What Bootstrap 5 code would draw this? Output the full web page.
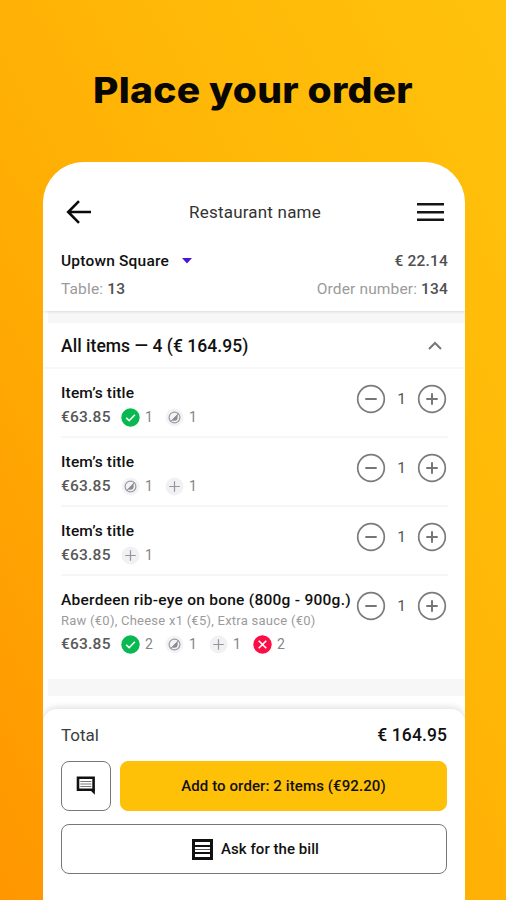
<!DOCTYPE html>
<html lang="en">
<head>
<meta charset="utf-8">
<meta name="viewport" content="width=device-width, initial-scale=1">
<title>Place your order</title>
<link href="https://cdn.jsdelivr.net/npm/bootstrap@5.3.0/dist/css/bootstrap.min.css" rel="stylesheet">
<style>
body{font-family:Roboto,"Liberation Sans",sans-serif;height:900px;background:linear-gradient(61deg,#ff9600 0%,#ffae04 42%,#ffb807 65%,#ffc20c 100%);color:#111;font-size:15.5px;line-height:20px}
svg{display:block;flex:none}
.headline{font:800 35.5px/44px Inter,"Open Sans",sans-serif;height:162px;padding-top:69px;color:#080703;letter-spacing:.2px;transform:scaleX(1.1)}
.phone{width:422px;height:738px;margin-left:43px;border-radius:41px 41px 0 0}
.topbar{height:149px;padding:30px 17px 0 18px;box-shadow:0 1px 3px rgba(0,0,0,.11);position:relative;border-radius:41px 41px 0 0}
.topbar-row{height:40px}
.bar-title{font-size:17px;color:#333;letter-spacing:.2px;margin-left:-3px}
.place{letter-spacing:.2px;padding-top:19px}
.place svg{margin-left:13px}
.details{letter-spacing:.15px;padding-top:8px}
.muted{color:#9b9b9b}
.soft{color:#3d3d3d}
.firm{color:#505050;font-weight:500}
.amount{letter-spacing:.2px}
.band{background:#f7f7f7;margin-left:5px}
.band-top{height:12px}
.band-end{height:17px}
.section-head{height:46px;padding:2px 20px 0 18px;border-bottom:2px solid #f8f8f8;font-size:17.5px;letter-spacing:.04px}
.items{padding:0 17px 0 18px}
.item{height:69px;border-bottom:2px solid #f6f6f6;padding-top:14px}
.item:last-child{height:103px;border:0}
.item-title{letter-spacing:.17px;white-space:nowrap;width:290px}
.item:last-child .item-title{letter-spacing:.26px}
.opts{font-size:13px;line-height:20px;letter-spacing:.25px;margin-top:1px}
.meta{height:20px;margin-top:4px}
.item:last-child .meta{margin-top:3px}
.price{width:60px;color:#585858;font-weight:500;letter-spacing:.22px}
.state{width:44px;color:#858585;font-size:14px;gap:5px}
.stepper{width:91px;height:30px;margin:1px 1px 0 0;color:#555}
.sheet{height:191px;border-radius:14px 14px 0 0;box-shadow:0 -2px 6px rgba(0,0,0,.12);padding:15px 18px 0}
.total{font-size:17px;line-height:22px}
.total-sum{font-size:17.5px;letter-spacing:.1px}
.actions{gap:9px;padding-top:15px}
.b{height:50px;border-radius:8px;--bs-btn-font-size:15px;--bs-btn-color:#111;--bs-btn-border-color:#777;--bs-btn-padding-y:0}
.b-note{width:50px}
.b-add{--bs-btn-bg:#ffc008;--bs-btn-border-color:#ffc008;letter-spacing:.1px}
.b-bill{gap:8px;margin-top:13px;padding-left:15px;letter-spacing:.05px}
</style>
</head>
<body class="overflow-hidden">
<svg width="0" height="0" class="position-absolute">
<defs>
<g id="ok"><circle cx="9.5" cy="9.5" r="9.2" fill="#08b851"/><path d="M5.2 9.8l3 2.9 5.7-5.9" fill="none" stroke="#fff" stroke-width="1.6"/></g>
<g id="cook"><circle cx="9.5" cy="9.5" r="9" fill="#f3f3f5"/><circle cx="9.5" cy="9.5" r="5.4" fill="none" stroke="#9a9aa0" stroke-width="1.2"/><path d="M12.6 6.2V9.5a3.2 3.2 0 0 1-3.2 3.2H6.8z" fill="#8b8b91"/><path d="M13.6 5.4l-8 8.2" stroke="#919197"/></g>
<g id="add"><circle cx="9.5" cy="9.5" r="9" fill="#f1f1f4"/><path d="M4.2 9.5h10.6M9.5 4.2v10.6" stroke="#95959b" stroke-width="1.2"/></g>
<g id="no"><circle cx="9.5" cy="9.5" r="9.2" fill="#fb0d45"/><path d="M5.7 5.7l7.6 7.6M13.3 5.7l-7.6 7.6" stroke="#fff" stroke-width="1.6"/></g>
<g id="less"><circle cx="15" cy="15" r="13.3" fill="none" stroke="#7b7b7e" stroke-width="1.7"/><path d="M9.3 15h11.4" stroke="#76767a" stroke-width="2"/></g>
<g id="more"><circle cx="15" cy="15" r="13.3" fill="none" stroke="#7b7b7e" stroke-width="1.7"/><path d="M9.3 15h11.4M15 9.3v11.4" stroke="#76767a" stroke-width="2"/></g>
</defs>
</svg>
<h1 class="headline m-0 text-center">Place your order</h1>
<main class="phone bg-white overflow-hidden d-flex flex-column">
  <header class="topbar bg-white">
    <div class="topbar-row d-flex justify-content-between align-items-center">
      <svg width="36" height="30" viewBox="0 0 36 30"><path d="M30 15H7.5M18 4.2L7.2 15 18 25.8" fill="none" stroke="#0b0b0b" stroke-width="2.6"/></svg>
      <span class="bar-title">Restaurant name</span>
      <svg width="32" height="24" viewBox="0 0 32 24"><path d="M1 4.2h27M1 12.2h27M1 19.8h27" stroke="#151515" stroke-width="2.6"/></svg>
    </div>
    <div class="place d-flex justify-content-between align-items-center">
      <span class="d-flex align-items-center fw-medium">Uptown Square<svg width="10" height="6" viewBox="0 0 10 6"><path d="M0 0h10L5 5.5z" fill="#4a16d4"/></svg></span>
      <span class="firm amount">€ 22.14</span>
    </div>
    <div class="details d-flex justify-content-between">
      <span><span class="muted">Table:</span> <span class="firm">13</span></span>
      <span><span class="muted">Order number:</span> <span class="firm">134</span></span>
    </div>
  </header>
  <div class="band band-top"></div>
  <div class="section-head d-flex justify-content-between align-items-center fw-medium">All items — 4 (€ 164.95)
    <svg width="20" height="14" viewBox="0 0 20 14"><path d="M4 10L10 4l6 6" fill="none" stroke="#777" stroke-width="2"/></svg>
  </div>
  <section class="items">
    <div class="item d-flex justify-content-between">
      <div><div class="item-title fw-medium">Item’s title</div>
        <div class="meta d-flex align-items-center"><span class="price">€63.85</span><span class="state d-flex align-items-center"><svg width="19" height="19"><use href="#ok"/></svg>1</span><span class="state d-flex align-items-center"><svg width="19" height="19"><use href="#cook"/></svg>1</span></div></div>
      <div class="stepper d-flex align-items-center justify-content-between"><svg width="30" height="30"><use href="#less"/></svg>1<svg width="30" height="30"><use href="#more"/></svg></div>
    </div>
    <div class="item d-flex justify-content-between">
      <div><div class="item-title fw-medium">Item’s title</div>
        <div class="meta d-flex align-items-center"><span class="price">€63.85</span><span class="state d-flex align-items-center"><svg width="19" height="19"><use href="#cook"/></svg>1</span><span class="state d-flex align-items-center"><svg width="19" height="19"><use href="#add"/></svg>1</span></div></div>
      <div class="stepper d-flex align-items-center justify-content-between"><svg width="30" height="30"><use href="#less"/></svg>1<svg width="30" height="30"><use href="#more"/></svg></div>
    </div>
    <div class="item d-flex justify-content-between">
      <div><div class="item-title fw-medium">Item’s title</div>
        <div class="meta d-flex align-items-center"><span class="price">€63.85</span><span class="state d-flex align-items-center"><svg width="19" height="19"><use href="#add"/></svg>1</span></div></div>
      <div class="stepper d-flex align-items-center justify-content-between"><svg width="30" height="30"><use href="#less"/></svg>1<svg width="30" height="30"><use href="#more"/></svg></div>
    </div>
    <div class="item d-flex justify-content-between">
      <div><div class="item-title fw-medium">Aberdeen rib-eye on bone (800g - 900g.)</div>
        <div class="opts muted">Raw (€0), Cheese x1 (€5), Extra sauce (€0)</div>
        <div class="meta d-flex align-items-center"><span class="price">€63.85</span><span class="state d-flex align-items-center"><svg width="19" height="19"><use href="#ok"/></svg>2</span><span class="state d-flex align-items-center"><svg width="19" height="19"><use href="#cook"/></svg>1</span><span class="state d-flex align-items-center"><svg width="19" height="19"><use href="#add"/></svg>1</span><span class="state d-flex align-items-center"><svg width="19" height="19"><use href="#no"/></svg>2</span></div></div>
      <div class="stepper d-flex align-items-center justify-content-between"><svg width="30" height="30"><use href="#less"/></svg>1<svg width="30" height="30"><use href="#more"/></svg></div>
    </div>
  </section>
  <div class="band band-end"></div>
  <footer class="sheet bg-white mt-auto">
    <div class="total d-flex justify-content-between"><span class="soft">Total</span><span class="total-sum fw-medium">€ 164.95</span></div>
    <div class="actions d-flex">
      <button class="btn b b-note p-0 d-flex align-items-center justify-content-center" aria-label="Comment"><svg width="20" height="20" viewBox="0 0 20 20"><path d="M2 1.8h15.6v12H2z" fill="#fff" stroke="#111" stroke-width="2.6"/><path d="M13.5 13.5h5.4v5.2z" fill="#111"/><path d="M4.4 5.5h11M4.4 8h11M4.4 10.5h11" stroke="#777" stroke-width="1"/></svg></button>
      <button class="btn b b-add flex-fill fw-medium">Add to order: 2 items (€92.20)</button>
    </div>
    <button class="btn b b-bill w-100 d-flex align-items-center justify-content-center fw-medium"><svg width="21" height="21" viewBox="0 0 21 21"><path d="M1.5 1.5h18v18h-18z" fill="#fff" stroke="#111" stroke-width="3"/><path d="M3 7h15M3 14h15" stroke="#111" stroke-width="1.8"/><path d="M3 10.5h15" stroke="#555"/></svg>Ask for the bill</button>
  </footer>
</main>
<script src="https://cdn.jsdelivr.net/npm/bootstrap@5.3.0/dist/js/bootstrap.bundle.min.js"></script>
</body>
</html>
